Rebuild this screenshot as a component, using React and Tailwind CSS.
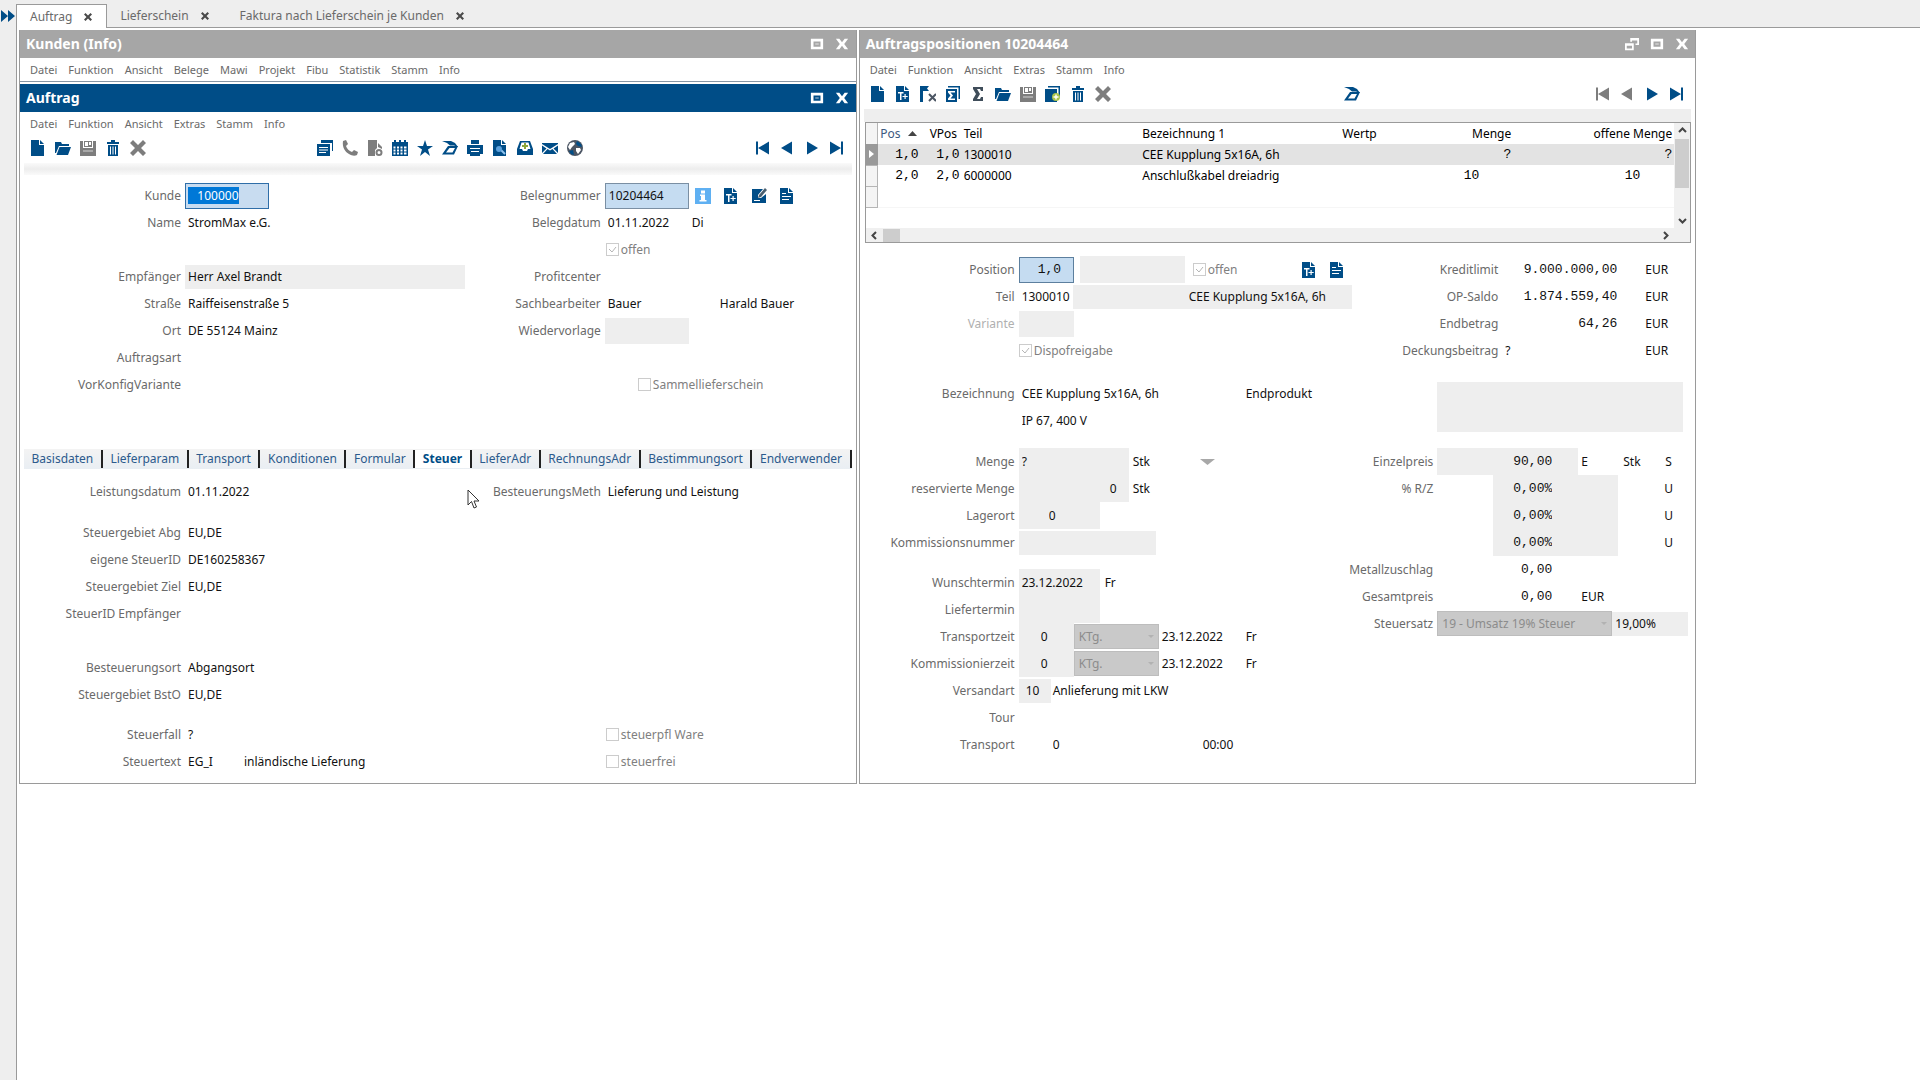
import React, { useEffect, useId, useRef } from "react";

/* ---------- Icons (16 x 16) ---------- */

const Svg = ({ children, size = 16 }) => (
    <svg width={size} height={size} viewBox="0 0 16 16" fill="currentColor" aria-hidden="true">
        {children}
    </svg>
);

const FileIcon = () => (
    <Svg>
        <path d="M1 0h8v5h5v11H1z" />
        <path d="M10 0l4 4h-4z" />
    </Svg>
);

const FolderIcon = () => (
    <Svg>
        <path d="M0 2h6l1 2h7v2H4L1 13H0z" />
        <path d="M4.500 7H16l-3 8H1.500z" />
    </Svg>
);

const SaveIcon = () => (
    <Svg>
        <path d="M0 1h3v7h10V1h3v15H0z" />
        <path d="M3 10h10v2H3z" fill="#a8a8a8" />
        <path fillRule="evenodd" d="M4 1h8v6H4zM5 2v4h3V2zM9 2v3h2V2z" />
    </Svg>
);

const TrashIcon = () => (
    <Svg>
        <path d="M2 2h4V0h4v2h4v2H2z" />
        <path fillRule="evenodd" d="M3 5h10v11H3zM5 6.500v8h1v-8zM7.500 6.500v8h1v-8zM10 6.500v8h1v-8z" />
    </Svg>
);

const CrossIcon = ({ size }) => (
    <Svg size={size}>
        <path d="M0 3l3-3 5 5 5-5 3 3-5 5 5 5-3 3-5-5-5 5-3-3 5-5z" />
    </Svg>
);

const WindowsIcon = () => (
    <Svg>
        <path d="M4 0h12v11h-1V3H4z" />
        <path fillRule="evenodd" d="M0 4h13v12H0zM2 7v1h9V7zM2 9.500v1h9v-1zM2 12v1h7v-1z" />
    </Svg>
);

const PhoneIcon = () => (
    <Svg>
        <path d="M1 1l3-1 2 4-2 2c1 3 3 5 6 6l2-2 4 2-1 3c-2 1-5 1-8-1C3 12 0 7 1 1z" />
    </Svg>
);

const ReportIcon = () => (
    <Svg>
        <path d="M1 0h9v8l-2 2v6H1z" />
        <path fillRule="evenodd" d="M11 3l4 4v2l-4-2zM12 9a3.500 3.500 0 110 7 3.500 3.500 0 010-7zm0 2a1.500 1.500 0 100 3 1.500 1.500 0 000-3z" />
    </Svg>
);

const CalendarIcon = () => (
    <Svg>
        <path d="M0 2h2V0h2v2h3V0h2v2h3V0h2v2h2v3H0z" />
        <path
            fillRule="evenodd"
            d="M0 5h16v11H0zM1.500 6.500v2h2v-2zM5 6.500v2h2v-2zM8.500 6.500v2h2v-2zM12 6.500v2h2.500v-2zM1.500 9.500v2h2v-2zM5 9.500v2h2v-2zM8.500 9.500v2h2v-2zM12 9.500v2h2.500v-2zM1.500 12.500v2h2v-2zM5 12.500v2h2v-2zM8.500 12.500v2h2v-2zM12 12.500v2h2.500v-2z"
        />
    </Svg>
);

const StarIcon = () => (
    <Svg>
        <path d="M8 0l2 6h6l-5 3.500 2 6.500-5-4-5 4 2-6.500L0 6h6z" />
    </Svg>
);

const WorkflowIcon = () => (
    <Svg>
        <path d="M0 1h9l4 2 3 4-4-1.500H8L5 3z" />
        <path fillRule="evenodd" d="M6 6h10l-4 8.500H0zM7.500 8L4 12.500h6.500L13 8z" />
    </Svg>
);

const PrinterIcon = () => (
    <Svg>
        <path d="M4 0h8v4H4z" />
        <path fillRule="evenodd" d="M0 5h16v9h-3v2H3v-2H0zM3 8v1h10V8zM4 11v1h8v-1z" />
    </Svg>
);

const PreviewIcon = () => (
    <Svg>
        <path d="M1 0h8v5h5v11H1z" />
        <path d="M10 0l4 4h-4z" />
        <path d="M9 10l4 4" stroke="#8fc3ee" strokeWidth="2" />
        <circle cx="7" cy="9" r="3" fill="#5aa0dc" />
    </Svg>
);

const InboxIcon = () => (
    <Svg>
        <path fillRule="evenodd" d="M3 1h10l3 8v6H0V9zM4.500 2.500L2.500 9H5l1 2h4l1-2h2.500l-2-6.500z" />
        <path d="M7 3h2v2h2v2H9v2H7V7H5V5h2z" fill="#8ba53a" />
    </Svg>
);

const MailIcon = () => (
    <Svg>
        <path d="M0 3h16v1L8 9 0 4z" />
        <path d="M0 5.500l4.500 3L0 13zM16 5.500l-4.500 3L16 13zM5.500 9L8 10.500 10.500 9l4.500 5H1z" />
    </Svg>
);

const GlobeIcon = () => (
    <Svg>
        <circle cx="8" cy="8" r="8" fill="#4b5563" />
        <path d="M3 3l4-1 1 2-3 3-2 3-2-3z" fill="#ffffff" />
        <path d="M9 8h4l1 2-3 4-2-3z" fill="#ffffff" />
        <path d="M10 1l4 3 1 3-4-1-2-2zM2 11l4-1 1 5-3-1z" fill="#004d87" />
    </Svg>
);

const FirstIcon = () => (
    <Svg>
        <path d="M2 1.500h2v13H2zM15 1.500v13L4 8z" />
    </Svg>
);

const PrevIcon = () => (
    <Svg>
        <path d="M13 1.500v13L2 8z" />
    </Svg>
);

const NextIcon = () => (
    <Svg>
        <path d="M3 1.500v13L14 8z" />
    </Svg>
);

const LastIcon = () => (
    <Svg>
        <path d="M14 1.500h-2v13h2zM1 1.500v13L12 8z" />
    </Svg>
);

const InfoIcon = () => (
    <Svg>
        <path d="M0 0h16v16H0z" fill="#5fb0f2" />
        <path d="M6 2.500h4v3H6zM5 6.500h5V12h1.500v1.500h-7V12H6V8H5z" fill="#ffffff" />
    </Svg>
);

const FilePlusIcon = () => (
    <Svg>
        <path
            fillRule="evenodd"
            d="M1 0h8v5h5v11H1zM3 6v1.500h2V14h1.500V7.500h2V6zM9.500 8v2h-2v1h2v2h1.200v-2h2v-1h-2V8z"
        />
        <path d="M10 0l4 4h-4z" />
    </Svg>
);

const EditIcon = () => (
    <Svg>
        <path d="M1 1h11L7 7v3h3l5-4v9H1z" />
        <path d="M14 0l2 2-6 7-3 1 1-3z" fill="#4b6070" />
        <path d="M3 12h6v1H3z" fill="#ffffff" />
    </Svg>
);

const TextFileIcon = () => (
    <Svg>
        <path fillRule="evenodd" d="M1 0h8v5h5v11H1zM3 5v1h4V5zM3 8v1h9V8zM3 11v1h7v-1z" />
        <path d="M10 0l4 4h-4z" />
    </Svg>
);

const FlagXIcon = () => (
    <Svg>
        <path d="M0 0h9L7 2.500 9 5H3v11H0z" />
        <path d="M9 8l7 7M16 8l-7 7" stroke="#4b5563" strokeWidth="2" />
    </Svg>
);

const SumPagesIcon = () => (
    <Svg>
        <path d="M3 0h12v13h-1.500V1.500H3z" />
        <path fillRule="evenodd" d="M1 3h11v13H1zM3 5v1.500l2.500 3L3 12.500V14h7v-1.500H5.500l2.500-3-2.500-3H10V5z" />
    </Svg>
);

const SigmaIcon = () => (
    <Svg>
        <path d="M3 1h10v4h-2l-1-2H7l3 5-3 5h3l1-2h2v4H3v-2l3-5-3-5z" />
    </Svg>
);

const AddPageIcon = () => (
    <Svg>
        <path d="M3 0h12v10h-1.500V1.500H3z" />
        <path d="M0 3h12v13H0z" />
        <circle cx="11" cy="11" r="4" fill="#a9c24a" />
        <path d="M10.300 8.500h1.400v1.800h1.800v1.400h-1.800v1.800h-1.400v-1.800H8.500v-1.400h1.800z" fill="#ffffff" />
    </Svg>
);

const MaximizeIcon = () => (
    <Svg size={14}>
        <path fillRule="evenodd" d="M1 2h14v12H1zM4 5v6h8V5z" />
        <path d="M6 7h4v2H6z" opacity=".4" />
    </Svg>
);

const DetachIcon = () => (
    <Svg size={14}>
        <path fillRule="evenodd" d="M0 7h10v8H0zM2 10v3h6v-3z" />
        <path d="M6 1h10v8h-4V7.500h2V4H8v1.500H6z" />
    </Svg>
);

const CloseIcon = () => (
    <Svg size={14}>
        <path d="M1 2h4l3 4 3-4h4l-4.500 6 4.500 6h-4l-3-4-3 4H1l4.500-6z" />
    </Svg>
);

/* ---------- Window parts ---------- */

const TitleBar = ({ title, active, detach }) => (
    <div
        className={`flex h-7 items-center justify-between pl-[6px] pr-px text-white ${
            active ? "bg-[#004d87]" : "bg-[#a6a6a6]"
        }`}
    >
        <h2 className="text-[14px] leading-5 font-bold">{title}</h2>
        <div className="flex">
            {detach && (
                <button aria-label="Abdocken" className="flex w-[25px] justify-center">
                    <DetachIcon />
                </button>
            )}
            <button aria-label="Maximieren" className="flex w-[25px] justify-center">
                <MaximizeIcon />
            </button>
            <button aria-label="Schließen" className="flex w-[25px] justify-center">
                <CloseIcon />
            </button>
        </div>
    </div>
);

const MenuBar = ({ items, className = "h-6" }) => (
    <nav className={`flex items-center gap-[11px] pl-[10px] text-[11px] text-[#6a6a6a] ${className}`}>
        {items.map((item) => (
            <button key={item}>{item}</button>
        ))}
    </nav>
);

const Tool = ({ icon: Icon, name, off, dark }) => (
    <button
        aria-label={name}
        className={`flex w-[25px] justify-center ${off ? "text-[#7d7d7d]" : dark ? "text-[#3f4d5a]" : "text-[#004d87]"}`}
    >
        <Icon />
    </button>
);

const RecordNav = ({ atStart }) => (
    <div className="flex">
        <Tool icon={FirstIcon} name="Erster Satz" off={atStart} />
        <Tool icon={PrevIcon} name="Voriger Satz" off={atStart} />
        <Tool icon={NextIcon} name="Nächster Satz" />
        <Tool icon={LastIcon} name="Letzter Satz" />
    </div>
);

/* ---------- Form parts ---------- */

const Row = ({ label, htmlFor, labelClass = "w-[161px]", faded, children }) => (
    <div className="flex h-[27px] items-center">
        <label
            htmlFor={htmlFor}
            className={`mr-1 shrink-0 text-right whitespace-nowrap ${labelClass} ${faded ? "text-[#b0b0b0]" : "text-[#6a6a6a]"}`}
        >
            {label}
        </label>
        {children}
    </div>
);

const Box = ({ id, value = "", name, className = "" }) => (
    <input
        id={id}
        aria-label={name}
        readOnly
        value={value}
        className={`h-6 shrink-0 px-[3px] outline-none ${className}`}
    />
);

const Field = ({ label, value, labelClass, faded, className = "w-[240px]", children }) => {
    const id = useId();
    return (
        <Row label={label} htmlFor={id} labelClass={labelClass} faded={faded}>
            <Box id={id} value={value} className={className} />
            {children}
        </Row>
    );
};

const Check = ({ label, checked, className = "" }) => (
    <label className={`flex h-[27px] items-center gap-[2px] text-[#808080] ${className}`}>
        <span className="relative flex">
            <input
                type="checkbox"
                disabled
                defaultChecked={checked}
                className="h-[13px] w-[13px] appearance-none border border-[#cccccc] bg-white"
            />
            {checked && (
                <svg className="absolute inset-0" width="13" height="13" viewBox="0 0 13 13" fill="none" stroke="#b5b5b5">
                    <path d="M3 6l3 3 4-5" />
                </svg>
            )}
        </span>
        {label}
    </label>
);

const Select = ({ id, name, value, className }) => (
    <span className={`relative flex shrink-0 ${className}`}>
        <select
            id={id}
            aria-label={name}
            disabled
            className="h-[25px] w-full appearance-none border border-[#bdbdbd] bg-[#c9c9c9] pl-1 text-[#8c8c8c] opacity-100"
        >
            <option>{value}</option>
        </select>
        <svg className="absolute top-0 right-1" width="8" height="25" viewBox="0 0 8 25" fill="#b2b2b2">
            <path d="M1 11h6l-3 3z" />
        </svg>
    </span>
);

/* ---------- Auftrag ---------- */

const tabs = [
    "Basisdaten",
    "Lieferparam",
    "Transport",
    "Konditionen",
    "Formular",
    "Steuer",
    "LieferAdr",
    "RechnungsAdr",
    "Bestimmungsort",
    "Endverwender",
];

const KundeField = () => {
    const ref = useRef(null);

    useEffect(() => {
        ref.current.focus();
        ref.current.select();
    }, []);

    return (
        <Row label="Kunde" htmlFor="kunde">
            <input
                id="kunde"
                ref={ref}
                defaultValue="   100000"
                className="h-[26px] w-[84px] border border-[#2f6ea8] bg-[#c8dcf0] px-[2px] outline-none selection:bg-[#0078d7] selection:text-white"
            />
        </Row>
    );
};

const AuftragWindow = () => (
    <section>
        <TitleBar title="Auftrag" active />
        <MenuBar items={["Datei", "Funktion", "Ansicht", "Extras", "Stamm", "Info"]} />
        <div className="flex h-6 items-center justify-between pr-[6px] pl-[5px]">
            <div className="flex">
                <Tool icon={FileIcon} name="Neu" />
                <Tool icon={FolderIcon} name="Öffnen" />
                <Tool icon={SaveIcon} name="Speichern" off />
                <Tool icon={TrashIcon} name="Löschen" />
                <Tool icon={CrossIcon} name="Abbrechen" off />
            </div>
            <div className="flex">
                <Tool icon={WindowsIcon} name="Fenster" />
                <Tool icon={PhoneIcon} name="Anrufen" off />
                <Tool icon={ReportIcon} name="Bericht" off />
                <Tool icon={CalendarIcon} name="Kalender" />
                <Tool icon={StarIcon} name="Favorit" />
                <Tool icon={WorkflowIcon} name="Workflow" />
                <Tool icon={PrinterIcon} name="Drucken" />
                <Tool icon={PreviewIcon} name="Vorschau" />
                <Tool icon={InboxIcon} name="Ablage" />
                <Tool icon={MailIcon} name="E-Mail" />
                <Tool icon={GlobeIcon} name="Web" />
            </div>
            <RecordNav />
        </div>
        <div className="mx-1 mt-[3px] h-3 bg-linear-to-b from-[#fafafa] via-[#ededed] to-[#fafafa]" />

        <div className="grid grid-cols-2 pt-[7px]">
            <div>
                <KundeField />
                <Field label="Name" value="StromMax e.G." />
                <div className="h-[27px]" />
                <Field label="Empfänger" value="Herr Axel Brandt" className="w-[280px] bg-[#eeeeee]" />
                <Field label="Straße" value="Raiffeisenstraße 5" />
                <Field label="Ort" value="DE 55124 Mainz" />
                <Field label="Auftragsart" />
                <Field label="VorKonfigVariante" />
            </div>
            <div className="pl-[2px]">
                <Field
                    label="Belegnummer"
                    value="10204464"
                    className="h-[26px] w-[84px] border border-[#7a8fa3] bg-[#c5dcf1] px-[2px]"
                >
                    <div className="ml-[2px] flex gap-[3px]">
                        <Tool icon={InfoIcon} name="Info" />
                        <Tool icon={FilePlusIcon} name="Text hinzufügen" />
                        <Tool icon={EditIcon} name="Bearbeiten" />
                        <Tool icon={TextFileIcon} name="Text" />
                    </div>
                </Field>
                <Field label="Belegdatum" value="01.11.2022" className="w-[87px]">
                    <span>Di</span>
                </Field>
                <Check label="offen" checked className="pl-[166px]" />
                <Field label="Profitcenter" />
                <Field label="Sachbearbeiter" value="Bauer" className="w-[115px]">
                    <span>Harald Bauer</span>
                </Field>
                <Field label="Wiedervorlage" className="h-[26px] w-[84px] bg-[#eeeeee]" />
                <div className="h-[27px]" />
                <Check label="Sammellieferschein" className="pl-[198px]" />
            </div>
        </div>

        <div className="mx-1 mt-[51px] flex h-5 items-center bg-linear-to-b from-[#f3f3f3] to-[#e9eef3]" role="tablist">
            {tabs.map((tab) => (
                <button
                    key={tab}
                    role="tab"
                    aria-selected={tab === "Steuer"}
                    className={`h-[18px] flex-auto border-r-2 border-[#222222] ${
                        tab === "Steuer" ? "bg-white font-bold text-[#004d87]" : "text-[#2c5a8c]"
                    }`}
                >
                    {tab}
                </button>
            ))}
        </div>

        <div className="grid grid-cols-2 pt-[9px] pb-[5px]">
            <div>
                <Field label="Leistungsdatum" value="01.11.2022" />
                <div className="h-[14px]" />
                <Field label="Steuergebiet Abg" value="EU,DE" />
                <Field label="eigene SteuerID" value="DE160258367" />
                <Field label="Steuergebiet Ziel" value="EU,DE" />
                <Field label="SteuerID Empfänger" />
                <div className="h-[27px]" />
                <Field label="Besteuerungsort" value="Abgangsort" />
                <Field label="Steuergebiet BstO" value="EU,DE" />
                <div className="h-[13px]" />
                <Field label="Steuerfall" value="?" />
                <Field label="Steuertext" value="EG_I" className="w-[59px]">
                    <span>inländische Lieferung</span>
                </Field>
            </div>
            <div className="flex flex-col justify-between pl-[2px]">
                <Field label="BesteuerungsMeth" value="Lieferung und Leistung" />
                <div>
                    <Check label="steuerpfl Ware" className="pl-[166px]" />
                    <Check label="steuerfrei" className="pl-[166px]" />
                </div>
            </div>
        </div>
    </section>
);

/* ---------- Auftragspositionen ---------- */

const positions = [
    { pos: "1,0", vpos: "1,0", teil: "1300010", text: "CEE Kupplung 5x16A, 6h", menge: "?", offen: "?" },
    { pos: "2,0", vpos: "2,0", teil: "6000000", text: "Anschlußkabel dreiadrig", menge: "10", offen: "10" },
];

const Chevron = ({ d }) => (
    <svg width="9" height="9" viewBox="0 0 9 9" fill="none" stroke="#444444" strokeWidth="2">
        <path d={d} />
    </svg>
);

const PositionTable = () => (
    <div className="mr-1 ml-[5px] border border-[#9a9a9a]">
        <div className="flex">
            <table className="h-[105px] flex-1 table-fixed border-collapse text-black">
                <colgroup>
                    <col className="w-[12px]" />
                    <col className="w-[43px]" />
                    <col className="w-[41px]" />
                    <col />
                    <col className="w-[200px]" />
                    <col className="w-[41px]" />
                    <col className="w-[134px]" />
                    <col className="w-[161px]" />
                </colgroup>
                <thead>
                    <tr className="h-[21px] text-left [&>th]:p-0 [&>th]:font-normal">
                        <th className="border-r border-[#b5b5b5] bg-[#f4f4f4]" />
                        <th className="text-[#3d5a80]">
                            <span className="flex items-center gap-2 pl-[2px]">
                                Pos
                                <svg width="9" height="5" viewBox="0 0 9 5" fill="#444444">
                                    <path d="M0 5h9L4.500 0z" />
                                </svg>
                            </span>
                        </th>
                        <th>
                            <span className="pl-[9px]">VPos</span>
                        </th>
                        <th>
                            <span className="pl-[2px]">Teil</span>
                        </th>
                        <th>
                            <span className="pl-1">Bezeichnung 1</span>
                        </th>
                        <th>
                            <span className="pl-1">Wertp</span>
                        </th>
                        <th className="text-right">
                            <span className="pr-[2px]">Menge</span>
                        </th>
                        <th className="text-right">
                            <span className="pr-[2px]">offene Menge</span>
                        </th>
                    </tr>
                </thead>
                <tbody className="[&_td]:p-0">
                    {positions.map((p, i) => (
                        <tr key={p.pos} className={`h-[21px] ${i === 0 ? "bg-[#e3e3e3]" : "bg-white"}`}>
                            <td className={i === 0 ? "bg-[#999999]" : "border border-l-0 border-[#b5b5b5] bg-[#f4f4f4]"}>
                                {i === 0 && (
                                    <svg className="ml-[3px]" width="5" height="8" viewBox="0 0 5 8" fill="#ffffff">
                                        <path d="M0 0v8l5-4z" />
                                    </svg>
                                )}
                            </td>
                            <td className="text-right font-['Liberation_Mono',monospace] text-[13px]">
                                <span className="pr-[2px]">{p.pos}</span>
                            </td>
                            <td className="text-right font-['Liberation_Mono',monospace] text-[13px]">
                                <span className="pr-[2px]">{p.vpos}</span>
                            </td>
                            <td>
                                <span className="pl-[2px]">{p.teil}</span>
                            </td>
                            <td>
                                <span className="pl-1">{p.text}</span>
                            </td>
                            <td />
                            <td className="text-right font-['Liberation_Mono',monospace] text-[13px]">
                                <span className={p.menge === "?" ? "pr-[2px]" : "pr-[34px]"}>{p.menge}</span>
                            </td>
                            <td className="text-right font-['Liberation_Mono',monospace] text-[13px]">
                                <span className={p.offen === "?" ? "pr-[2px]" : "pr-[34px]"}>{p.offen}</span>
                            </td>
                        </tr>
                    ))}
                    <tr className="h-[21px]">
                        <td className="border border-l-0 border-[#b5b5b5] bg-[#f4f4f4]" />
                        <td colSpan={7} className="border-b border-[#f6f6f6]" />
                    </tr>
                    <tr>
                        <td colSpan={8} />
                    </tr>
                </tbody>
            </table>
            <div className="flex w-4 flex-col items-center justify-between bg-[#f0f0f0] py-[3px]">
                <Chevron d="M1 6l3.500-3.500L8 6" />
                <div className="mt-1 mb-auto h-[49px] w-[14px] bg-[#cdcdcd]" />
                <Chevron d="M1 3l3.500 3.500L8 3" />
            </div>
        </div>
        <div className="flex h-[14px] items-center bg-[#f0f0f0] pr-[20px] pl-1">
            <Chevron d="M6 1L2.500 4.500 6 8" />
            <div className="mr-auto ml-1 h-[13px] w-[17px] bg-[#cdcdcd]" />
            <Chevron d="M3 1l3.500 3.500L3 8" />
        </div>
    </div>
);

const LEFT = "w-[154px]";
const TOTAL = "w-[143px]";
const PRICE = "w-[89px]";

const PositionForm = () => (
    <div className="pt-[13px] pb-[25px] pl-px">
        <div className="flex justify-between">
            <div>
                <Field
                    label="Position"
                    value="1,0"
                    labelClass={LEFT}
                    className="h-[26px] w-[55px] border border-[#5c7f9e] bg-[#c5dcf1] pl-[18px] font-['Liberation_Mono',monospace] text-[13px]"
                >
                    <Box name="Position Zusatz" className="ml-[6px] h-[27px] w-[105px] bg-[#eeeeee]" />
                    <Check label="offen" checked className="ml-2 w-[104px]" />
                    <div className="flex gap-[3px]">
                        <Tool icon={FilePlusIcon} name="Text hinzufügen" />
                        <Tool icon={TextFileIcon} name="Text" />
                    </div>
                </Field>
                <Field label="Teil" value="1300010" labelClass={LEFT} className="w-[54px]">
                    <Box name="Teil Zusatz" className="w-[113px] bg-[#eeeeee]" />
                    <Box name="Teil Bezeichnung" value="CEE Kupplung 5x16A, 6h" className="w-[166px] bg-[#eeeeee]" />
                </Field>
                <Field label="Variante" faded labelClass={LEFT} className="h-[26px] w-[55px] bg-[#eeeeee]" />
                <Check label="Dispofreigabe" checked className="pl-[158px]" />
            </div>
            <div className="w-[340px] shrink-0">
                {[
                    ["Kreditlimit", "9.000.000,00"],
                    ["OP-Saldo", "1.874.559,40"],
                    ["Endbetrag", "64,26"],
                ].map(([label, value]) => (
                    <Field
                        key={label}
                        label={label}
                        value={value}
                        labelClass={TOTAL}
                        className="w-[118px] text-right font-['Liberation_Mono',monospace] text-[13px]"
                    >
                        <span className="ml-[25px]">EUR</span>
                    </Field>
                ))}
                <Field label="Deckungsbeitrag" value="?" labelClass={TOTAL} className="w-[118px]">
                    <span className="ml-[25px]">EUR</span>
                </Field>
            </div>
        </div>

        <div className="mt-4 flex justify-between">
            <div>
                <Field label="Bezeichnung" value="CEE Kupplung 5x16A, 6h" labelClass={LEFT} className="w-[227px]">
                    <span>Endprodukt</span>
                </Field>
                <Field label="" value="IP 67, 400 V" labelClass={LEFT} />
                <div className="h-[14px]" />
                <Field label="Menge" value="?" labelClass={LEFT} className="h-[27px] w-[110px] bg-[#eeeeee]">
                    <span className="ml-1 w-[67px]">Stk</span>
                    <svg width="15" height="6" viewBox="0 0 15 6" fill="#a8a8a8">
                        <path d="M0 0h15L7.500 6z" />
                    </svg>
                </Field>
                <Field
                    label="reservierte Menge"
                    value="0"
                    labelClass={LEFT}
                    className="h-[27px] w-[110px] bg-[#eeeeee] pr-[12px] text-right"
                >
                    <span className="ml-1">Stk</span>
                </Field>
                <Field label="Lagerort" value="0" labelClass={LEFT} className="h-[27px] w-[81px] bg-[#eeeeee] pl-[30px]" />
                <Field label="Kommissionsnummer" labelClass={LEFT} className="w-[137px] bg-[#eeeeee]" />
                <div className="h-[13px]" />
                <Field label="Wunschtermin" value="23.12.2022" labelClass={LEFT} className="h-[27px] w-[81px] bg-[#eeeeee]">
                    <span className="ml-[5px]">Fr</span>
                </Field>
                <Field label="Liefertermin" labelClass={LEFT} className="h-[27px] w-[81px] bg-[#eeeeee]" />
                {["Transportzeit", "Kommissionierzeit"].map((label) => (
                    <Field
                        key={label}
                        label={label}
                        value="0"
                        labelClass={LEFT}
                        className="h-[27px] w-[55px] bg-[#eeeeee] pl-[22px]"
                    >
                        <Select name={`${label} Einheit`} value="KTg." className="w-[85px]" />
                        <span className="ml-[3px] w-[84px]">23.12.2022</span>
                        <span>Fr</span>
                    </Field>
                ))}
                <Field label="Versandart" value="10" labelClass={LEFT} className="w-[32px] bg-[#eeeeee] pl-[7px]">
                    <span className="ml-[2px]">Anlieferung mit LKW</span>
                </Field>
                <Field label="Tour" labelClass={LEFT} />
                <Field label="Transport" value="0" labelClass={LEFT} className="w-[184px] pl-[34px]">
                    <span>00:00</span>
                </Field>
            </div>
            <div className="w-[351px] shrink-0">
                <textarea
                    aria-label="Zusatztext"
                    readOnly
                    className="mb-[14px] ml-[93px] block h-[54px] w-[246px] resize-none border-y-2 border-white bg-[#eeeeee] outline-none"
                />
                <Field
                    label="Einzelpreis"
                    value="90,00"
                    labelClass={PRICE}
                    className="h-[27px] w-[141px] bg-[#eeeeee] pr-[26px] text-right font-['Liberation_Mono',monospace] text-[13px]"
                >
                    <span className="ml-[3px] w-[42px]">E</span>
                    <span className="w-[42px]">Stk</span>
                    <span>S</span>
                </Field>
                {["% R/Z", "", ""].map((label, i) => (
                    <Field
                        key={i}
                        label={label}
                        value="0,00%"
                        labelClass={PRICE}
                        className="ml-14 h-[27px] w-[125px] bg-[#eeeeee] pr-[66px] text-right font-['Liberation_Mono',monospace] text-[13px]"
                    >
                        <span className="ml-[46px]">U</span>
                    </Field>
                ))}
                <Field
                    label="Metallzuschlag"
                    value="0,00"
                    labelClass={PRICE}
                    className="w-[141px] pr-[26px] text-right font-['Liberation_Mono',monospace] text-[13px]"
                />
                <Field
                    label="Gesamtpreis"
                    value="0,00"
                    labelClass={PRICE}
                    className="w-[141px] pr-[26px] text-right font-['Liberation_Mono',monospace] text-[13px]"
                >
                    <span className="ml-[3px]">EUR</span>
                </Field>
                <Row label="Steuersatz" htmlFor="steuersatz" labelClass={PRICE}>
                    <Select id="steuersatz" value="19 - Umsatz 19% Steuer" className="w-[175px]" />
                    <Box name="Steuersatz Prozent" value="19,00%" className="w-[76px] bg-[#eeeeee]" />
                </Row>
            </div>
        </div>
    </div>
);

const PositionsWindow = () => (
    <section className="border border-t-0 border-[#9a9a9a]">
        <TitleBar title="Auftragspositionen 10204464" detach />
        <MenuBar items={["Datei", "Funktion", "Ansicht", "Extras", "Stamm", "Info"]} />
        <div className="flex h-6 items-center justify-between px-[6px]">
            <div className="flex">
                <Tool icon={FileIcon} name="Neu" />
                <Tool icon={FilePlusIcon} name="Neu mit Text" />
                <Tool icon={FlagXIcon} name="Markierung entfernen" />
                <Tool icon={SumPagesIcon} name="Summen" />
                <Tool icon={SigmaIcon} name="Summe" dark />
                <Tool icon={FolderIcon} name="Öffnen" />
                <Tool icon={SaveIcon} name="Speichern" off />
                <Tool icon={AddPageIcon} name="Kopieren" />
                <Tool icon={TrashIcon} name="Löschen" />
                <Tool icon={CrossIcon} name="Abbrechen" off />
            </div>
            <Tool icon={WorkflowIcon} name="Workflow" />
            <RecordNav atStart />
        </div>
        <div className="mx-1 mt-[3px] h-[13px] bg-[#eeeeee]" />
        <PositionTable />
        <PositionForm />
    </section>
);

/* ---------- Page ---------- */

const documents = [
    { name: "Auftrag", active: true },
    { name: "Lieferschein" },
    { name: "Faktura nach Lieferschein je Kunden" },
];

export default function App() {
    return (
        <div className="flex min-h-screen flex-col bg-[#eeeeee] font-['Noto_Sans',sans-serif] text-[12px] leading-4 text-[#111111]">
            <header className="flex h-7 items-end">
                <button aria-label="Navigation öffnen" className="mb-[6px] w-4 text-[#004d87]">
                    <svg width="15" height="12" viewBox="0 0 15 12" fill="currentColor">
                        <path d="M1 0l7 6-7 6zM8 0l7 6-7 6z" />
                    </svg>
                </button>
                {documents.map((doc) => (
                    <div
                        key={doc.name}
                        className={`flex h-6 items-center gap-3 border-[#9a9a9a] pl-[13px] text-[#6a6a6a] ${
                            doc.active ? "border-x border-t bg-white pr-[14px]" : "border-b pr-[18px]"
                        }`}
                    >
                        <button>{doc.name}</button>
                        <button aria-label={`${doc.name} schließen`} className="text-[#4a4a4a]">
                            <CrossIcon size={8} />
                        </button>
                    </div>
                ))}
                <div className="h-6 flex-1 border-b border-[#9a9a9a]" />
            </header>

            <main className="ml-4 flex-1 border-l border-[#9a9a9a] bg-white pt-[2px] pl-[2px]">
                <div className="grid grid-cols-[34fr_34fr_9fr] gap-x-[2px]">
                    <section className="border border-t-0 border-[#9a9a9a]">
                        <TitleBar title="Kunden (Info)" />
                        <MenuBar
                            className="h-[23px]"
                            items={[
                                "Datei",
                                "Funktion",
                                "Ansicht",
                                "Belege",
                                "Mawi",
                                "Projekt",
                                "Fibu",
                                "Statistik",
                                "Stamm",
                                "Info",
                            ]}
                        />
                        <div className="mb-[2px] border-t border-[#8796a5]" />
                        <AuftragWindow />
                    </section>
                    <PositionsWindow />
                </div>
            </main>

            <svg
                className="pointer-events-none absolute top-[489px] left-[467px]"
                width="14"
                height="20"
                viewBox="0 0 14 20"
                fill="#ffffff"
                stroke="#333333"
            >
                <path d="M1 1v15l3.500-3.500L7 19l2.500-1L7 12h5z" />
            </svg>
        </div>
    );
}
